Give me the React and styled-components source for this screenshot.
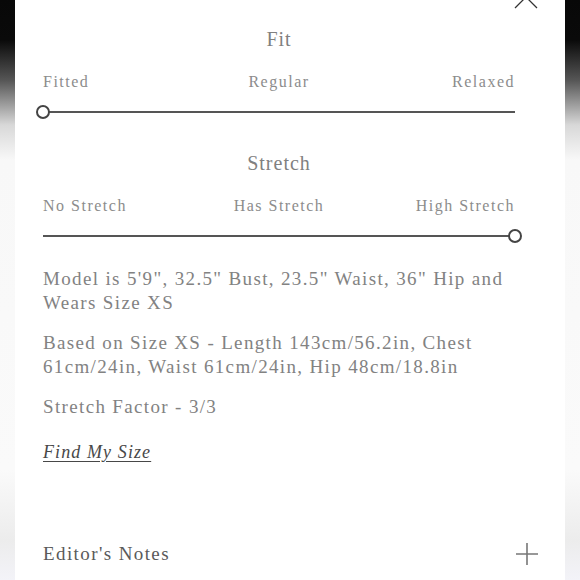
import React from 'react'
import styled, { createGlobalStyle } from 'styled-components'

const GlobalStyle = createGlobalStyle`
  html, body {
    margin: 0;
    padding: 0;
    height: 580px;
    overflow: hidden;
  }
  body {
    background: linear-gradient(
      to bottom,
      #080808 0px,
      #0a0a0a 40px,
      #555 80px,
      #d8d8d8 125px,
      #f8f8f8 160px,
      #fafafa 470px,
      #ececec 540px,
      #f3f3f8 580px
    );
    font-family: "Liberation Serif", "DejaVu Serif", serif;
  }
`

const Panel = styled.div`
  position: relative;
  margin: 0 15px;
  height: 580px;
  background: #fff;
  box-sizing: border-box;
  padding: 27px 50px 0 28px;
  color: #808080;
`

const CloseButton = styled.button`
  position: absolute;
  top: -15px;
  right: 27px;
  width: 24px;
  height: 24px;
  padding: 0;
  border: none;
  background: none;
  cursor: pointer;
`

const Section = styled.section`
  display: flex;
  flex-direction: column;
  margin-bottom: ${p => p.$gap || 0}px;
`

const Title = styled.h3`
  margin: 0;
  font-weight: normal;
  font-size: 20px;
  line-height: 24px;
  letter-spacing: 1px;
  text-align: center;
  color: #808080;
`

const Labels = styled.div`
  display: grid;
  grid-template-columns: 1fr auto 1fr;
  margin-top: 21px;
  font-size: 16px;
  line-height: 20px;
  letter-spacing: 1.5px;
  color: #8c8c8c;

  & > span:last-child {
    justify-self: end;
  }
`

const Track = styled.div`
  position: relative;
  margin-top: 13px;
  height: 14px;

  &::before {
    content: '';
    position: absolute;
    left: 0;
    right: 0;
    top: 6px;
    height: 2px;
    background: #555;
  }
`

const Thumb = styled.span`
  position: absolute;
  top: 0;
  left: ${p => (p.$end ? 'calc(100% - 7px)' : '-7px')};
  width: 10px;
  height: 10px;
  border: 2px solid #444;
  border-radius: 50%;
  background: #fff;
`

const Text = styled.p`
  margin: 0 0 16px;
  font-size: 19px;
  line-height: 24px;
  letter-spacing: 1.35px;
  color: #828282;
`

const SizeLink = styled.a`
  display: inline-block;
  margin-top: 5px;
  font-size: 18px;
  line-height: 24px;
  font-style: italic;
  letter-spacing: 1.1px;
  color: #484848;
  text-decoration: underline;
  text-underline-offset: 3px;
`

const Accordion = styled.div`
  display: flex;
  align-items: center;
  justify-content: space-between;
  margin-top: 78px;
  margin-right: -23px;
  font-size: 19px;
  line-height: 24px;
  letter-spacing: 1.4px;
  color: #5a5a5a;
`

const Slider = ({ title, labels, end, gap }) => (
  <Section $gap={gap}>
    <Title>{title}</Title>
    <Labels>
      {labels.map(l => <span key={l}>{l}</span>)}
    </Labels>
    <Track>
      <Thumb $end={end} />
    </Track>
  </Section>
)

const App = () => (
  <>
    <GlobalStyle />
    <Panel>
      <CloseButton aria-label="Close">
        <svg width="24" height="24" viewBox="0 0 24 24">
          <path d="M1 1 L23 23 M23 1 L1 23" stroke="#333" strokeWidth="1.3" fill="none" />
        </svg>
      </CloseButton>
      <Slider title="Fit" labels={['Fitted', 'Regular', 'Relaxed']} gap={32} />
      <Slider title="Stretch" labels={['No Stretch', 'Has Stretch', 'High Stretch']} end gap={24} />
      <Text>Model is 5'9", 32.5" Bust, 23.5" Waist, 36" Hip and Wears Size XS</Text>
      <Text>Based on Size XS - Length 143cm/56.2in, Chest 61cm/24in, Waist 61cm/24in, Hip 48cm/18.8in</Text>
      <Text>Stretch Factor - 3/3</Text>
      <SizeLink href="#">Find My Size</SizeLink>
      <Accordion>
        <span>Editor's Notes</span>
        <svg width="22" height="22" viewBox="0 0 22 22">
          <path d="M11 0 V22 M0 11 H22" stroke="#777" strokeWidth="1.6" fill="none" />
        </svg>
      </Accordion>
    </Panel>
  </>
)

export default App
